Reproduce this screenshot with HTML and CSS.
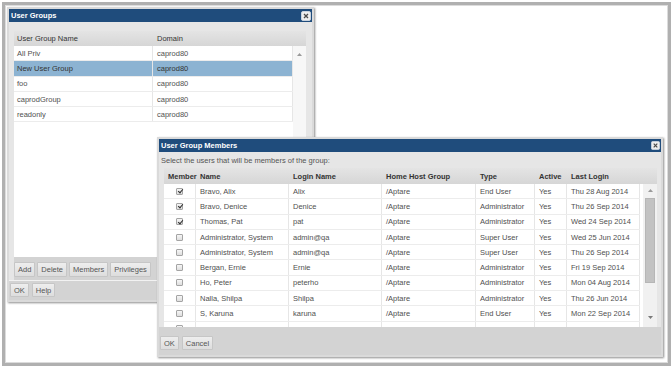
FILE: index.html
```html
<!DOCTYPE html>
<html lang="en">
<head>
    <meta charset="UTF-8">
    <title>User Groups</title>
    <link rel="stylesheet" href="styles.css">
</head>
<body>
    <div class="desktop">

        <!-- User Groups window -->
        <div class="dialog groups">
            <div class="titlebar">
                <span>User Groups</span>
                <svg class="close" width="10" height="10" viewBox="0 0 10 10">
                    <rect x="0.5" y="0.5" width="9" height="9" rx="1.5" fill="#eeeeee" stroke="#c9d3de"/>
                    <path d="M3 3 L7 7 M7 3 L3 7" stroke="#4a4a4a" stroke-width="1.3"/>
                </svg>
            </div>
            <div class="dialog-body">
                <div class="panel">
                    <div class="grid-head">
                        <div class="cell g-name">User Group Name</div>
                        <div class="cell g-domain">Domain</div>
                        <div class="cell g-scroll"></div>
                    </div>
                    <div class="grid-body">
                        <div class="rows">
                            <div class="row"><div class="cell g-name">All Priv</div><div class="cell g-domain">caprod80</div></div>
                            <div class="row selected"><div class="cell g-name">New User Group</div><div class="cell g-domain">caprod80</div></div>
                            <div class="row"><div class="cell g-name">foo</div><div class="cell g-domain">caprod80</div></div>
                            <div class="row"><div class="cell g-name">caprodGroup</div><div class="cell g-domain">caprod80</div></div>
                            <div class="row"><div class="cell g-name">readonly</div><div class="cell g-domain">caprod80</div></div>
                        </div>
                        <div class="vscroll light">
                            <svg class="arrow" width="5" height="3" viewBox="0 0 5 3"><path d="M0 3 L2.5 0 L5 3 Z" fill="#9a9a9a"/></svg>
                        </div>
                    </div>
                    <div class="toolbar">
                        <span class="btn">Add</span>
                        <span class="btn">Delete</span>
                        <span class="btn">Members</span>
                        <span class="btn">Privileges</span>
                    </div>
                </div>
            </div>
            <div class="footer">
                <span class="btn">OK</span>
                <span class="btn">Help</span>
            </div>
        </div>

        <!-- User Group Members window -->
        <div class="dialog members">
            <div class="titlebar">
                <span>User Group Members</span>
                <svg class="close" width="9" height="9" viewBox="0 0 10 10">
                    <rect x="0.5" y="0.5" width="9" height="9" rx="1.5" fill="#eeeeee" stroke="#c9d3de"/>
                    <path d="M3 3 L7 7 M7 3 L3 7" stroke="#4a4a4a" stroke-width="1.3"/>
                </svg>
            </div>
            <div class="dialog-body">
                <div class="hint">Select the users that will be members of the group:</div>
                <div class="panel">
                    <div class="grid-head bold">
                        <div class="cell m-member">Member</div>
                        <div class="cell m-name">Name</div>
                        <div class="cell m-login">Login Name</div>
                        <div class="cell m-home">Home Host Group</div>
                        <div class="cell m-type">Type</div>
                        <div class="cell m-active">Active</div>
                        <div class="cell m-last">Last Login</div>
                        <div class="cell m-scroll"></div>
                    </div>
                    <div class="grid-body">
                        <div class="rows">
                            <div class="row"><div class="cell m-member"><span class="check on"></span></div><div class="cell m-name">Bravo, Alix</div><div class="cell m-login">Alix</div><div class="cell m-home">/Aptare</div><div class="cell m-type">End User</div><div class="cell m-active">Yes</div><div class="cell m-last">Thu 28 Aug 2014</div></div>
                            <div class="row"><div class="cell m-member"><span class="check on"></span></div><div class="cell m-name">Bravo, Denice</div><div class="cell m-login">Denice</div><div class="cell m-home">/Aptare</div><div class="cell m-type">Administrator</div><div class="cell m-active">Yes</div><div class="cell m-last">Thu 26 Sep 2014</div></div>
                            <div class="row"><div class="cell m-member"><span class="check on"></span></div><div class="cell m-name">Thomas, Pat</div><div class="cell m-login">pat</div><div class="cell m-home">/Aptare</div><div class="cell m-type">Administrator</div><div class="cell m-active">Yes</div><div class="cell m-last">Wed 24 Sep 2014</div></div>
                            <div class="row"><div class="cell m-member"><span class="check"></span></div><div class="cell m-name">Administrator, System</div><div class="cell m-login">admin@qa</div><div class="cell m-home">/Aptare</div><div class="cell m-type">Super User</div><div class="cell m-active">Yes</div><div class="cell m-last">Wed 25 Jun 2014</div></div>
                            <div class="row"><div class="cell m-member"><span class="check"></span></div><div class="cell m-name">Administrator, System</div><div class="cell m-login">admin@qa</div><div class="cell m-home">/Aptare</div><div class="cell m-type">Super User</div><div class="cell m-active">Yes</div><div class="cell m-last">Thu 26 Sep 2014</div></div>
                            <div class="row"><div class="cell m-member"><span class="check"></span></div><div class="cell m-name">Bergan, Ernie</div><div class="cell m-login">Ernie</div><div class="cell m-home">/Aptare</div><div class="cell m-type">Administrator</div><div class="cell m-active">Yes</div><div class="cell m-last">Fri 19 Sep 2014</div></div>
                            <div class="row"><div class="cell m-member"><span class="check"></span></div><div class="cell m-name">Ho, Peter</div><div class="cell m-login">peterho</div><div class="cell m-home">/Aptare</div><div class="cell m-type">Administrator</div><div class="cell m-active">Yes</div><div class="cell m-last">Mon 04 Aug 2014</div></div>
                            <div class="row"><div class="cell m-member"><span class="check"></span></div><div class="cell m-name">Nalla, Shilpa</div><div class="cell m-login">Shilpa</div><div class="cell m-home">/Aptare</div><div class="cell m-type">Administrator</div><div class="cell m-active">Yes</div><div class="cell m-last">Thu 26 Jun 2014</div></div>
                            <div class="row"><div class="cell m-member"><span class="check"></span></div><div class="cell m-name">S, Karuna</div><div class="cell m-login">karuna</div><div class="cell m-home">/Aptare</div><div class="cell m-type">End User</div><div class="cell m-active">Yes</div><div class="cell m-last">Mon 22 Sep 2014</div></div>
                            <div class="row"><div class="cell m-member"><span class="check"></span></div><div class="cell m-name"></div><div class="cell m-login"></div><div class="cell m-home"></div><div class="cell m-type"></div><div class="cell m-active"></div><div class="cell m-last"></div></div>
                        </div>
                        <div class="vscroll">
                            <div class="track">
                                <svg class="arrow" width="5" height="3" viewBox="0 0 5 3"><path d="M0 3 L2.5 0 L5 3 Z" fill="#9a9a9a"/></svg>
                                <div class="thumb"></div>
                                <svg class="arrow down" width="5" height="3" viewBox="0 0 5 3"><path d="M0 0 L2.5 3 L5 0 Z" fill="#7a7a7a"/></svg>
                            </div>
                        </div>
                    </div>
                </div>
            </div>
            <div class="footer tall">
                <span class="btn">OK</span>
                <span class="btn">Cancel</span>
            </div>
        </div>

    </div>
</body>
</html>
```

FILE: styles.css
```css
* {
    margin: 0;
    padding: 0;
    box-sizing: border-box;
}

body {
    font-family: "Liberation Sans", Arial, sans-serif;
    font-size: 7.5px;
    color: #505050;
    background: white;
}

.desktop {
    position: relative;
    width: 669px;
    height: 364px;
    margin: 2px 0 0 2px;
    border: 3px solid #b0b0b0;
    box-shadow: inset 0 0 0 1px #dcdcdc;
    background: white;
}

/* windows */
.dialog {
    position: absolute;
    display: flex;
    flex-direction: column;
    padding: 2px;
    background: #dadada;
    box-shadow: 1px 1px 2px rgba(0,0,0,0.45);
}

.groups {
    left: 2px;
    top: 2px;
    width: 307px;
    height: 295px;
}

.members {
    left: 152px;
    top: 132px;
    width: 506px;
    height: 220px;
}

.titlebar {
    height: 13px;
    flex-shrink: 0;
    display: flex;
    align-items: center;
    justify-content: space-between;
    padding: 0 1px 0 2px;
    background: #1f4c7c;
    color: white;
    font-weight: bold;
}

.close {
    display: block;
}

.dialog-body {
    flex: 1;
    display: flex;
    flex-direction: column;
    min-height: 0;
    background: #e6e6e6;
}

.groups .dialog-body {
    padding: 9px 6px 0 5px;
}

.members .dialog-body {
    padding: 0 4px 0 5px;
}

.hint {
    height: 16px;
    display: flex;
    align-items: center;
    margin-left: -3px;
    color: #555;
}

.panel {
    flex: 1;
    display: flex;
    flex-direction: column;
    min-height: 0;
    background: white;
}

/* grids */
.grid-head {
    height: 15px;
    flex-shrink: 0;
    display: flex;
    background: linear-gradient(#e4e4e4, #d6d6d6);
    color: #333;
}

.members .grid-head {
    height: 16px;
}

.grid-head.bold {
    font-weight: bold;
}

.grid-body {
    flex: 1;
    display: flex;
    min-height: 0;
    overflow: hidden;
}

.rows {
    flex: 1;
    overflow: hidden;
}

.row {
    height: 15.3px;
    display: flex;
    border-bottom: 1px solid #ececec;
}

.row.selected {
    background: #8cb3d2;
    color: #333;
}

.cell {
    display: flex;
    align-items: center;
    padding-left: 4px;
    white-space: nowrap;
    flex-shrink: 0;
}

.row .cell {
    border-right: 1px solid #e6e6e6;
}

.g-name { width: 139px; padding-left: 3px; }
.g-domain { width: 140px; }
.g-scroll { width: 13px; }

.m-member { width: 32px; }
.m-name { width: 93px; }
.m-login { width: 93px; }
.m-home { width: 94px; }
.m-type { width: 59px; }
.m-active { width: 32px; }
.m-last { width: 73px; }
.m-scroll { width: 17px; }

.row .m-member {
    justify-content: center;
    padding-left: 0;
}

.check {
    width: 7px;
    height: 7px;
    border: 1px solid #a4a4a4;
    border-radius: 1px;
    background: linear-gradient(#f6f6f6, #dedede);
    position: relative;
}

.check.on::after {
    content: "";
    position: absolute;
    left: 1.5px;
    top: -0.5px;
    width: 2px;
    height: 4px;
    border: solid #2e2e2e;
    border-width: 0 1.5px 1.5px 0;
    transform: rotate(40deg);
}

/* scrollbars */
.vscroll {
    width: 13px;
    flex-shrink: 0;
    display: flex;
    flex-direction: column;
    align-items: center;
    background: #f7f7f7;
}

.vscroll.light .arrow {
    margin-top: 7px;
}

.members .vscroll {
    width: 17px;
    padding-left: 3px;
    background: white;
}

.track {
    width: 14px;
    height: 100%;
    display: flex;
    flex-direction: column;
    align-items: center;
    background: #f1f1f1;
}

.track .arrow {
    margin-top: 5px;
}

.thumb {
    width: 10px;
    height: 85px;
    margin-top: 6px;
    background: #c2c2c2;
    border: 1px solid #b6b6b6;
}

.track .arrow.down {
    margin-top: auto;
    margin-bottom: 8px;
}

/* buttons */
.toolbar {
    height: 23px;
    flex-shrink: 0;
    display: flex;
    gap: 2px;
    padding-top: 5px;
    background: #d3d3d3;
}

.toolbar .btn {
    height: 15px;
}

.footer {
    height: 20px;
    flex-shrink: 0;
    display: flex;
    gap: 3px;
    padding: 2px 0 0 1px;
    background: #d3d3d3;
    border-top: 1px solid #f2f2f2;
}

.footer.tall {
    height: 28px;
    padding-top: 9px;
    border-top: none;
}

.btn {
    height: 14px;
    display: flex;
    align-items: center;
    padding: 0 3px;
    background: linear-gradient(#eeeeee, #dddddd);
    border: 1px solid #c6c6c6;
    border-radius: 1px;
    color: #555;
}
```
